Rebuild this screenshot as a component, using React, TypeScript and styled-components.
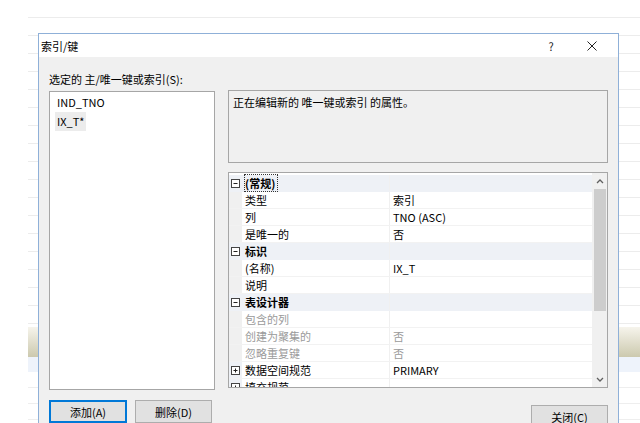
import * as React from 'react';
import styled, { createGlobalStyle } from 'styled-components';

const GlobalStyle = createGlobalStyle`
  html, body {
    margin: 0;
    padding: 0;
    background: #ffffff;
  }
  body {
    font-family: "Noto Sans CJK SC", "Noto Sans", sans-serif;
    font-size: 11px;
    color: #000;
  }
  * {
    box-sizing: border-box;
  }
`;

const Desktop = styled.div`
  position: relative;
  width: 640px;
  height: 423px;
  overflow: hidden;
  background: #ffffff;
`;

// the application window behind the dialog
const BackWindow = styled.div`
  position: absolute;
  left: 28px;
  top: 0;
  right: 0;
  bottom: 0;
  background:
    linear-gradient(#f6f4ec, #ccc9ae) 0 327px / 100% 30px no-repeat,
    linear-gradient(#eef3fb, #eef3fb) 0 357px / 100% 15px no-repeat,
    repeating-linear-gradient(#ffffff 0 17px, #ececec 17px 18px) 0 0 / 100% 327px no-repeat,
    repeating-linear-gradient(#ffffff 0 15px, #eeeeee 15px 16px) 0 372px / 100% 60px no-repeat;
`;

const Dialog = styled.div`
  position: absolute;
  left: 38px;
  top: 33px;
  width: 581px;
  height: 400px;
  border: 1px solid #8fb0d8;
  background: #f0f0f0;
  display: flex;
  flex-direction: column;
`;

const TitleBar = styled.div`
  height: 23px;
  background: #ffffff;
  display: flex;
  align-items: center;
  padding-left: 2px;
`;

const Title = styled.div`
  flex: 1;
  font-size: 11px;
`;

const TitleButton = styled.div<{ $width: number }>`
  width: ${p => p.$width}px;
  display: flex;
  justify-content: center;
  align-items: center;
  font-size: 11px;
  color: #222;
`;

const Body = styled.div`
  display: flex;
  gap: 13px;
  padding: 0 10px;
`;

const LeftColumn = styled.div`
  width: 166px;
  display: flex;
  flex-direction: column;
  padding-top: 14px;
`;

const Label = styled.div`
  height: 16px;
  line-height: 16px;
  margin-bottom: 4px;
`;

const ListBox = styled.div`
  height: 299px;
  background: #ffffff;
  border: 1px solid #a6a6a6;
  padding: 1px 5px;
  display: flex;
  flex-direction: column;
  align-items: flex-start;
`;

const ListItem = styled.div<{ $selected?: boolean }>`
  height: 19px;
  line-height: 19px;
  padding: 0 2px;
  background: ${p => (p.$selected ? '#ececec' : 'transparent')};
`;

const ButtonRow = styled.div<{ $align?: string; $top: number }>`
  display: flex;
  gap: 8px;
  justify-content: ${p => p.$align || 'flex-start'};
  margin-top: ${p => p.$top}px;
`;

const Button = styled.div<{ $focused?: boolean; $width: number }>`
  width: ${p => p.$width}px;
  height: 23px;
  display: flex;
  align-items: center;
  justify-content: center;
  background: #e1e1e1;
  border: ${p => (p.$focused ? '2px solid #0078d7' : '1px solid #adadad')};
`;

const RightColumn = styled.div`
  flex: 1;
  display: flex;
  flex-direction: column;
  padding-top: 33px;
`;

const Description = styled.div`
  height: 73px;
  border: 1px solid #a6a6a6;
  background: #f0f0f0;
  padding: 3px 4px;
  line-height: 16px;
`;

const PropertyGrid = styled.div`
  margin-top: 9px;
  height: 216px;
  border: 1px solid #a6a6a6;
  background: #ffffff;
  display: flex;
  overflow: hidden;
`;

const Rows = styled.div`
  flex: 1;
  padding-top: 2px;
  overflow: hidden;
`;

const Row = styled.div<{ $category?: boolean }>`
  display: grid;
  grid-template-columns: 13px 148px 1fr;
  height: 17px;
  line-height: 16px;
  background: ${p => (p.$category ? '#eef1f6' : '#ffffff')};
  border-bottom: 1px solid ${p => (p.$category ? '#eef1f6' : '#f2f2f2')};
`;

const Margin = styled.div<{ $category?: boolean }>`
  background: ${p => (p.$category ? '#eef1f6' : '#f0f0f0')};
  display: flex;
  align-items: center;
  justify-content: center;
`;

const Toggle = styled.div`
  width: 9px;
  height: 9px;
  border: 1px solid #444;
  position: relative;
  background: #fff;
`;

const Name = styled.div<{ $bold?: boolean; $muted?: boolean }>`
  padding-left: 3px;
  font-weight: ${p => (p.$bold ? 700 : 400)};
  color: ${p => (p.$muted ? '#9a9a9a' : '#000')};
  border-right: 1px solid #f0f0f0;
  white-space: nowrap;
`;

const Value = styled.div<{ $muted?: boolean }>`
  padding-left: 3px;
  color: ${p => (p.$muted ? '#9a9a9a' : '#000')};
  white-space: nowrap;
`;

const FocusBox = styled.span`
  outline: 1px dotted #333;
  outline-offset: 0;
  padding: 0 2px 0 0;
`;

const ScrollBar = styled.div`
  width: 15px;
  background: #f0f0f0;
  display: flex;
  flex-direction: column;
  align-items: center;
`;

const Arrow = styled.div`
  height: 16px;
  display: flex;
  align-items: center;
  justify-content: center;
`;

const Thumb = styled.div`
  width: 12px;
  height: 122px;
  background: #cdcdcd;
`;

const Track = styled.div`
  flex: 1;
`;

const Chevron = ({ down }: { down?: boolean }) => (
  <svg width="8" height="5" viewBox="0 0 8 5">
    <path
      d={down ? 'M1 1 L4 4 L7 1' : 'M1 4 L4 1 L7 4'}
      fill="none"
      stroke="#606060"
      strokeWidth="1.3"
    />
  </svg>
);

const ExpandIcon = ({ open }: { open: boolean }) => (
  <Toggle>
    <svg width="7" height="7" viewBox="0 0 7 7" style={{ position: 'absolute', left: 0, top: 0 }}>
      <path d="M1.5 3.5 H5.5" stroke="#222" strokeWidth="1" />
      {!open && <path d="M3.5 1.5 V5.5" stroke="#222" strokeWidth="1" />}
    </svg>
  </Toggle>
);

interface PropRow {
  kind: 'category' | 'prop' | 'group';
  name: string;
  value?: string;
  muted?: boolean;
  focused?: boolean;
}

const rows: PropRow[] = [
  { kind: 'category', name: '(常规)', focused: true },
  { kind: 'prop', name: '类型', value: '索引' },
  { kind: 'prop', name: '列', value: 'TNO (ASC)' },
  { kind: 'prop', name: '是唯一的', value: '否' },
  { kind: 'category', name: '标识' },
  { kind: 'prop', name: '(名称)', value: 'IX_T' },
  { kind: 'prop', name: '说明', value: '' },
  { kind: 'category', name: '表设计器' },
  { kind: 'prop', name: '包含的列', value: '', muted: true },
  { kind: 'prop', name: '创建为聚集的', value: '否', muted: true },
  { kind: 'prop', name: '忽略重复键', value: '否', muted: true },
  { kind: 'group', name: '数据空间规范', value: 'PRIMARY' },
  { kind: 'group', name: '填充规范', value: '' },
];

const PropertyRow = ({ row }: { row: PropRow }) => {
  const isCategory = row.kind === 'category';
  return (
    <Row $category={isCategory}>
      <Margin $category={isCategory || row.kind === 'group'}>
        {isCategory && <ExpandIcon open />}
        {row.kind === 'group' && <ExpandIcon open={false} />}
      </Margin>
      <Name $bold={isCategory} $muted={row.muted}>
        {row.focused ? <FocusBox>{row.name}</FocusBox> : row.name}
      </Name>
      <Value $muted={row.muted}>{row.value}</Value>
    </Row>
  );
};

const CloseIcon = () => (
  <svg width="10" height="10" viewBox="0 0 10 10">
    <path d="M0.5 0.5 L9.5 9.5 M9.5 0.5 L0.5 9.5" stroke="#222" strokeWidth="1" />
  </svg>
);

export default function App() {
  return (
    <Desktop>
      <GlobalStyle />
      <BackWindow />
      <Dialog>
        <TitleBar>
          <Title>索引/键</Title>
          <TitleButton $width={30}>?</TitleButton>
          <TitleButton $width={52}>
            <CloseIcon />
          </TitleButton>
        </TitleBar>
        <Body>
          <LeftColumn>
            <Label>选定的 主/唯一键或索引(S):</Label>
            <ListBox>
              <ListItem>IND_TNO</ListItem>
              <ListItem $selected>IX_T*</ListItem>
            </ListBox>
            <ButtonRow $top={10}>
              <Button $focused $width={78}>添加(A)</Button>
              <Button $width={77}>删除(D)</Button>
            </ButtonRow>
          </LeftColumn>
          <RightColumn>
            <Description>正在编辑新的 唯一键或索引 的属性。</Description>
            <PropertyGrid>
              <Rows>
                {rows.map(r => (
                  <PropertyRow key={r.name} row={r} />
                ))}
              </Rows>
              <ScrollBar>
                <Arrow>
                  <Chevron />
                </Arrow>
                <Thumb />
                <Track />
                <Arrow>
                  <Chevron down />
                </Arrow>
              </ScrollBar>
            </PropertyGrid>
            <ButtonRow $align="flex-end" $top={17}>
              <Button $width={77}>关闭(C)</Button>
            </ButtonRow>
          </RightColumn>
        </Body>
      </Dialog>
    </Desktop>
  );
}
